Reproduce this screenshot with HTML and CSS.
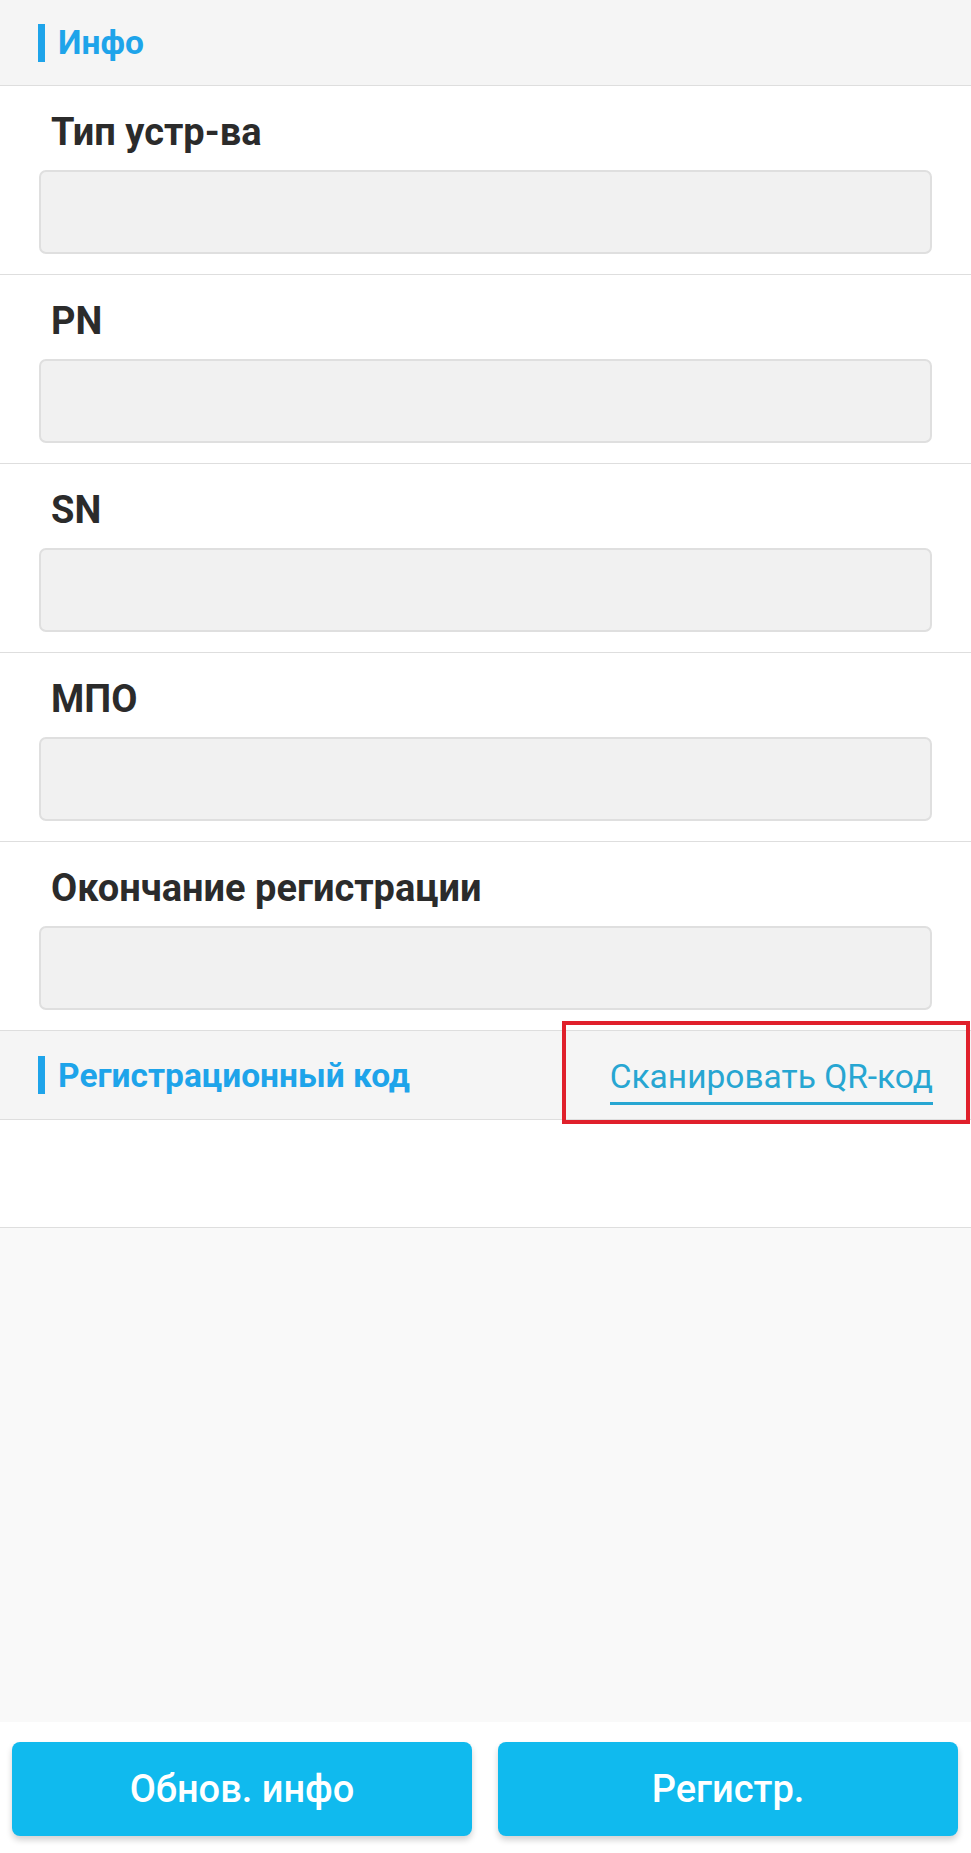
FILE: index.html
```html
<!DOCTYPE html>
<html lang="ru">
<head>
    <meta charset="UTF-8">
    <meta name="viewport" content="width=device-width, initial-scale=1.0">
    <title>Регистрация устройства</title>
    <link rel="stylesheet" href="styles.css">
</head>
<body>
    <div class="page">
        <div class="section-head">
            <span class="mark"></span>
            <span class="head-title">Инфо</span>
        </div>

        <div class="field">
            <label class="field-label" for="devType">Тип устр-ва</label>
            <input class="field-input" type="text" id="devType" readonly>
        </div>
        <div class="field">
            <label class="field-label" for="pn">PN</label>
            <input class="field-input" type="text" id="pn" readonly>
        </div>
        <div class="field">
            <label class="field-label" for="sn">SN</label>
            <input class="field-input" type="text" id="sn" readonly>
        </div>
        <div class="field">
            <label class="field-label" for="mpo">МПО</label>
            <input class="field-input" type="text" id="mpo" readonly>
        </div>
        <div class="field">
            <label class="field-label" for="regEnd">Окончание регистрации</label>
            <input class="field-input" type="text" id="regEnd" readonly>
        </div>

        <div class="section-head reg-head">
            <span class="mark"></span>
            <span class="head-title">Регистрационный код</span>
            <a class="scan-link" href="#">Сканировать QR-код</a>
            <!-- highlight frame from the annotated screenshot -->
            <div class="highlight"></div>
        </div>
        <div class="reg-code"></div>

        <div class="filler"></div>

        <div class="footer">
            <button class="action-btn">Обнов. инфо</button>
            <button class="action-btn">Регистр.</button>
        </div>
    </div>
</body>
</html>
```

FILE: styles.css
```css
body {
    margin: 0;
    padding: 0;
    font-family: Roboto, "Noto Sans", Arial, sans-serif;
    background-color: #ffffff;
}
.page {
    display: flex;
    flex-direction: column;
    min-height: 100vh;
}
.section-head {
    display: flex;
    align-items: center;
    height: 86px;
    padding-left: 38px;
    background-color: #f5f5f5;
    border-bottom: 1px solid #dedede;
    box-sizing: border-box;
}
.mark {
    display: block;
    width: 7px;
    height: 38px;
    background-color: #1ea4ea;
    margin-right: 13px;
}
.head-title {
    font-size: 33.5px;
    font-weight: bold;
    color: #1ea4ea;
}
.field {
    display: flex;
    flex-direction: column;
    padding: 23px 39px 20px 39px;
    border-bottom: 1px solid #dedede;
}
.field-label {
    font-size: 38px;
    line-height: 46px;
    font-weight: bold;
    color: #2b2b2b;
    padding-left: 12px;
    margin-bottom: 15px;
}
.field-input {
    height: 84px;
    box-sizing: border-box;
    background-color: #f1f1f1;
    border: 2px solid #dfdfdf;
    border-radius: 7px;
    outline: none;
}
.reg-head {
    position: relative;
    height: 89px;
    padding-right: 38px;
}
.scan-link {
    margin-left: auto;
    font-size: 33.5px;
    color: #27a6d2;
    text-decoration: none;
    border-bottom: 3px solid #27a6d2;
    padding-bottom: 6px;
    margin-top: 12px;
}
.highlight {
    position: absolute;
    left: 562px;
    top: -10px;
    width: 408px;
    height: 103px;
    box-sizing: border-box;
    border: 4px solid #e0202b;
}
.reg-code {
    height: 107px;
    background-color: #ffffff;
    border-bottom: 1px solid #dedede;
}
.filler {
    flex: 1;
    background-color: #f9f9f9;
}
.footer {
    display: flex;
    gap: 26px;
    padding: 20px 13px 17px 12px;
    background-color: #ffffff;
}
.action-btn {
    flex: 1;
    height: 94px;
    border: none;
    border-radius: 8px;
    background-color: #10baee;
    color: white;
    font-family: Roboto, "Noto Sans", Arial, sans-serif;
    font-size: 38px;
    font-weight: 500;
    box-shadow: 0px 4px 6px rgba(0, 0, 0, 0.18);
    cursor: pointer;
}
```
